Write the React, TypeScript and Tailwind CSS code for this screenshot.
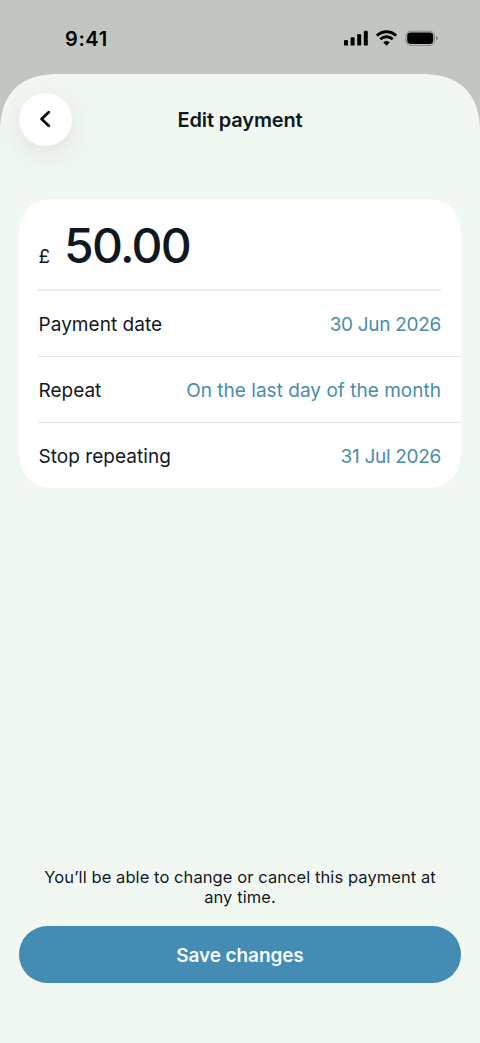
const rows = [
    { label: "Payment date", value: "30 Jun 2026", labelClass: "tracking-[0.05px]", valueClass: "tracking-[-0.3px]" },
    { label: "Repeat", value: "On the last day of the month", labelClass: "tracking-[0px]", valueClass: "tracking-[0.02px]" },
    { label: "Stop repeating", value: "31 Jul 2026", labelClass: "tracking-[0.05px]", valueClass: "tracking-[-0.3px]" },
];

function StatusBar() {
    return (
        <div className="flex h-[74px] shrink-0 items-start justify-between pl-[65px] pr-[41px] pt-[26px]">
            <span className="text-[20px] font-semibold leading-[26px] tracking-[0.6px] text-black">9:41</span>
            <div className="flex items-center pt-[4px]">
                <svg width="24" height="16" viewBox="0 0 24 16" fill="#000">
                    <rect x="0" y="10" width="4" height="5.6" rx="1.2" />
                    <rect x="6.6" y="7.2" width="4" height="8.4" rx="1.2" />
                    <rect x="13.2" y="4" width="4" height="11.6" rx="1.2" />
                    <rect x="19.8" y="0.8" width="4" height="14.8" rx="1.2" />
                </svg>
                <svg className="ml-[8px]" width="21" height="16" viewBox="0 0 21 16" fill="none" stroke="#000" strokeWidth="2.8">
                    <path d="M0.9 5.7a13.7 13.7 0 0 1 19.2 0" />
                    <path d="M4.3 9.3a8.8 8.8 0 0 1 12.4 0" />
                    <path d="M10.5 15.8 7.3 12.5a4.7 4.7 0 0 1 6.4 0Z" fill="#000" stroke="none" />
                </svg>
                <svg className="ml-[8px]" width="34" height="16" viewBox="0 0 34 16">
                    <rect x="0.9" y="1.2" width="28.6" height="14.2" rx="4.6" fill="none" stroke="#000" strokeOpacity="0.3" />
                    <rect x="2.2" y="2.6" width="26" height="11.4" rx="3.4" fill="#000" />
                    <path d="M31.2 6.2v4.2c.9-.4 1.5-1.2 1.5-2.1s-.6-1.7-1.5-2.1Z" fill="#000" fillOpacity="0.4" />
                </svg>
            </div>
        </div>
    );
}

export default function App() {
    return (
        <div className="flex h-[1043px] w-[480px] flex-col overflow-hidden bg-[#c1c6c1] font-['Inter','Liberation_Sans',sans-serif] text-[#10181f]">
            <StatusBar />
            <main className="flex flex-1 flex-col rounded-t-[60px] bg-[#f1f8f2] px-[19px] pt-[19px] [corner-shape:superellipse(1.3)]">
                <header className="grid grid-cols-[53px_1fr_53px] items-center">
                    <button className="flex size-[53px] items-center justify-center rounded-full bg-white pb-px pr-[2px] shadow-[0_8px_32px_rgba(0,0,0,0.09)]" aria-label="Back">
                        <svg width="12" height="18" viewBox="0 0 12 18" fill="none" stroke="#0b0f12" strokeWidth="2.9" strokeLinecap="round" strokeLinejoin="round">
                            <path d="M9.7 2.3 2.6 9l7.1 6.7" />
                        </svg>
                    </button>
                    <h1 className="text-center text-[20px] font-semibold leading-[26px] tracking-[-0.15px]">Edit payment</h1>
                </header>

                <section className="mt-[53px] overflow-hidden rounded-[38px] bg-white pl-[19px] [corner-shape:superellipse(1.3)]">
                    <div className="mr-[20px] flex h-[92px] items-baseline border-b-2 border-[#ededee] pt-[16px]">
                        <span className="w-[26px] pl-[0.5px] text-[19px]">£</span>
                        <span className="text-[48px] font-medium leading-[62px] tracking-[-1.7px]">50.00</span>
                    </div>
                    {rows.map((row) => (
                        <div key={row.label} className="flex h-[66px] items-center justify-between border-b border-[#e3e5e6] pl-[0.5px] pr-[20px] pt-[4px] text-[19px] last:h-[65px] last:border-b-0">
                            <span className={row.labelClass}>{row.label}</span>
                            <span className={`text-[#4a8ca8] ${row.valueClass}`}>{row.value}</span>
                        </div>
                    ))}
                </section>

                <footer className="mb-[60px] mt-auto">
                    <p className="mb-[19px] text-center text-[16.5px] leading-[20px] tracking-[0.08px]">
                        You’ll be able to change or cancel this payment at<br />any time.
                    </p>
                    <button className="h-[57px] w-full rounded-full bg-[#448cb4] pt-[3px] text-[19px] font-semibold tracking-[-0.1px] text-[#f5fbff]">Save changes</button>
                </footer>
            </main>
        </div>
    );
}
